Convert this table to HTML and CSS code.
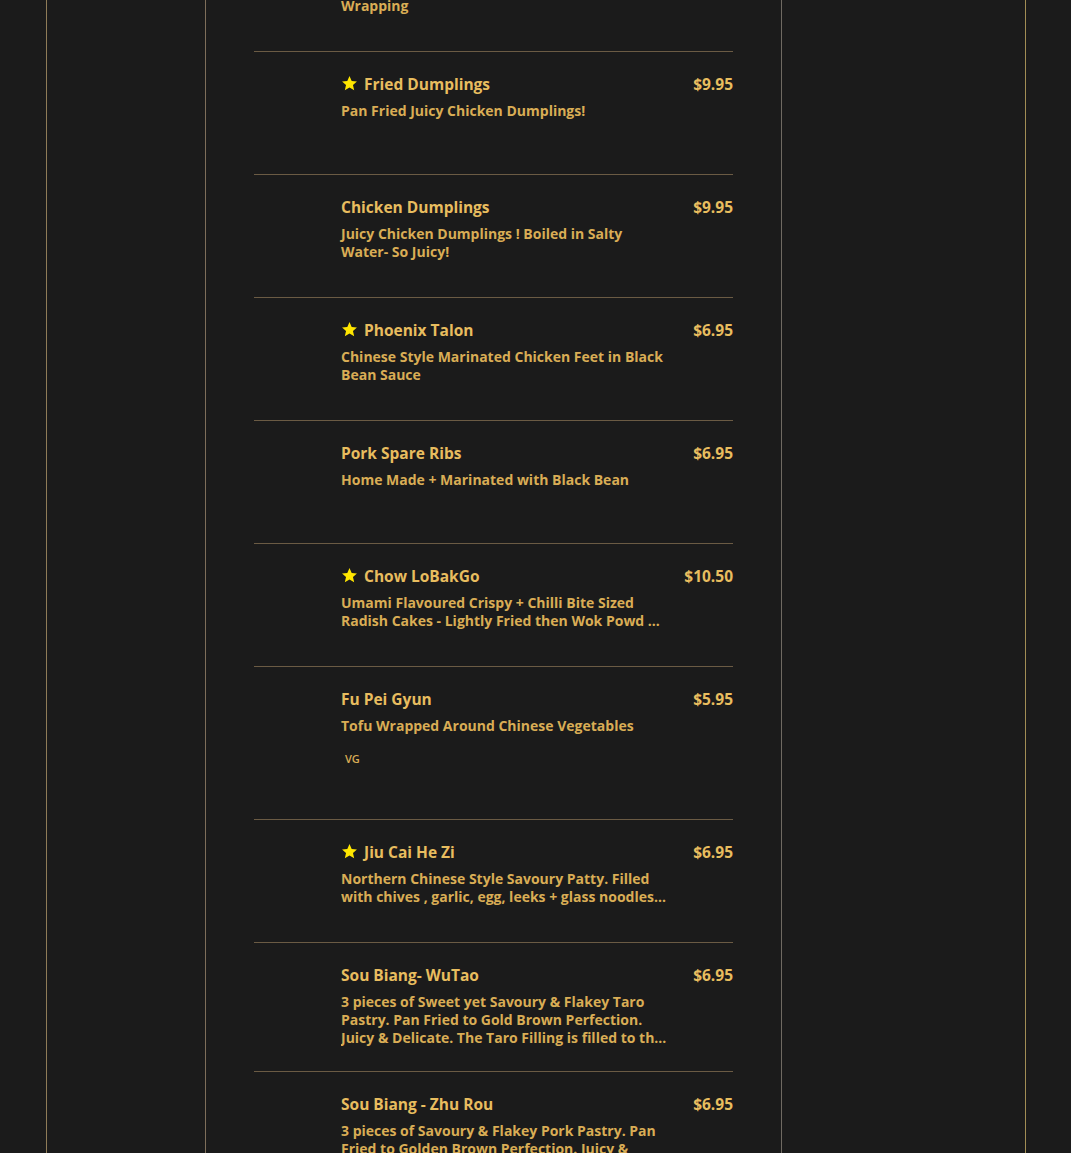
FILE: index.html
```html
<!DOCTYPE html>
<html lang="en">
<head>
<meta charset="utf-8">
<title>Menu</title>
<link rel="stylesheet" href="styles.css">
</head>
<body>
<div class="frame">
  <div class="column">
    <ul class="menu">
      <li class="item item-partial">
        <p class="desc">Wrapping</p>
      </li>
      <li class="item">
        <div class="head">
          <h3 class="name"><svg class="star" viewBox="0 0 24 24"><path d="M12 1.5l3.1 7 7.4.6-5.6 4.9 1.7 7.4L12 17.5l-6.6 3.9 1.7-7.4L1.5 9.1l7.4-.6z"/></svg>Fried Dumplings</h3>
          <span class="price">$9.95</span>
        </div>
        <p class="desc">Pan Fried Juicy Chicken Dumplings!</p>
      </li>
      <li class="item">
        <div class="head">
          <h3 class="name">Chicken Dumplings</h3>
          <span class="price">$9.95</span>
        </div>
        <p class="desc">Juicy Chicken Dumplings ! Boiled in Salty Water- So Juicy!</p>
      </li>
      <li class="item">
        <div class="head">
          <h3 class="name"><svg class="star" viewBox="0 0 24 24"><path d="M12 1.5l3.1 7 7.4.6-5.6 4.9 1.7 7.4L12 17.5l-6.6 3.9 1.7-7.4L1.5 9.1l7.4-.6z"/></svg>Phoenix Talon</h3>
          <span class="price">$6.95</span>
        </div>
        <p class="desc">Chinese Style Marinated Chicken Feet in Black Bean Sauce</p>
      </li>
      <li class="item">
        <div class="head">
          <h3 class="name">Pork Spare Ribs</h3>
          <span class="price">$6.95</span>
        </div>
        <p class="desc">Home Made + Marinated with Black Bean</p>
      </li>
      <li class="item">
        <div class="head">
          <h3 class="name"><svg class="star" viewBox="0 0 24 24"><path d="M12 1.5l3.1 7 7.4.6-5.6 4.9 1.7 7.4L12 17.5l-6.6 3.9 1.7-7.4L1.5 9.1l7.4-.6z"/></svg>Chow LoBakGo</h3>
          <span class="price">$10.50</span>
        </div>
        <p class="desc clamp2">Umami Flavoured Crispy + Chilli Bite Sized Radish Cakes - Lightly Fried then Wok Powd ...</p>
      </li>
      <li class="item">
        <div class="head">
          <h3 class="name">Fu Pei Gyun</h3>
          <span class="price">$5.95</span>
        </div>
        <p class="desc">Tofu Wrapped Around Chinese Vegetables</p>
        <div class="tags"><span class="tag">VG</span></div>
      </li>
      <li class="item">
        <div class="head">
          <h3 class="name"><svg class="star" viewBox="0 0 24 24"><path d="M12 1.5l3.1 7 7.4.6-5.6 4.9 1.7 7.4L12 17.5l-6.6 3.9 1.7-7.4L1.5 9.1l7.4-.6z"/></svg>Jiu Cai He Zi</h3>
          <span class="price">$6.95</span>
        </div>
        <p class="desc clamp2">Northern Chinese Style Savoury Patty. Filled with chives , garlic, egg, leeks + glass noodles Pan fried until golden and crispy.</p>
      </li>
      <li class="item">
        <div class="head">
          <h3 class="name">Sou Biang- WuTao</h3>
          <span class="price">$6.95</span>
        </div>
        <p class="desc clamp3">3 pieces of Sweet yet Savoury &amp; Flakey Taro Pastry. Pan Fried to Gold Brown Perfection. Juicy &amp; Delicate. The Taro Filling is filled to the brim with flavour.</p>
      </li>
      <li class="item">
        <div class="head">
          <h3 class="name">Sou Biang - Zhu Rou</h3>
          <span class="price">$6.95</span>
        </div>
        <p class="desc clamp3">3 pieces of Savoury &amp; Flakey Pork Pastry. Pan Fried to Golden Brown Perfection. Juicy &amp; Delicate. Filled with seasoned pork.</p>
      </li>
    </ul>
  </div>
</div>
</body>
</html>
```
FILE: styles.css
```css
* { box-sizing: border-box; }

html, body {
  margin: 0;
  padding: 0;
  height: 1153px;
  overflow: hidden;
  background: #1b1b1b;
}

body {
  font-family: "Open Sans", Lato, sans-serif;
  color: #e6bb5c;
}

.frame {
  margin: 0 45px 0 46px;
  height: 100%;
  border-left: 1px solid #8f7c58;
  border-right: 1px solid #a28d55;
}

.column {
  display: flow-root;
  margin-left: 158px;
  width: 577px;
  height: 100%;
  border-left: 1px solid #7e6e5a;
  border-right: 1px solid #6f6a62;
  padding-left: 48px;
}

.menu {
  list-style: none;
  margin: 0;
  padding: 0;
  width: 479px;
}

.item {
  padding: 22px 0 24px 87px;
  min-height: 123px;
  border-bottom: 1px solid #6b5b44;
}

.item-partial {
  min-height: 0;
  height: 55px;
  padding-top: 0;
}

.item-partial .desc {
  margin-top: -3px;
}

.head {
  display: flex;
  justify-content: space-between;
  align-items: center;
  height: 20px;
}

.name {
  margin: 0;
  display: flex;
  align-items: center;
  gap: 6px;
  font-size: 15.5px;
  font-weight: 700;
  line-height: 20px;
  color: #e8bd5f;
}

.star {
  width: 17px;
  height: 17px;
  fill: #ffe600;
  flex: none;
  margin-top: -2px;
}

.price {
  font-size: 15.5px;
  font-weight: 700;
  line-height: 20px;
  color: #e8bd5f;
}

.desc {
  margin: 8px 0 0;
  width: 332px;
  font-size: 14px;
  font-weight: 700;
  line-height: 18px;
  color: #d9ad55;
}

.clamp2, .clamp3 {
  display: -webkit-box;
  -webkit-box-orient: vertical;
  overflow: hidden;
}

.clamp2 { -webkit-line-clamp: 2; }
.clamp3 { -webkit-line-clamp: 3; }

.tags {
  margin-top: 11px;
  padding-bottom: 27px;
}

.tag {
  display: inline-block;
  padding-left: 4px;
  font-size: 11px;
  font-weight: 600;
  line-height: 16px;
  color: #d9ad55;
}
```
